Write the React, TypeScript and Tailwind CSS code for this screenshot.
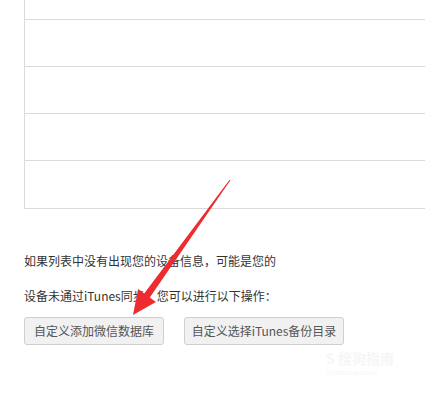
import React from 'react';

const rows = [0, 1, 2, 3];

export default function App() {
  return (
    <div
      className="relative w-[425px] h-[404px] overflow-hidden bg-white pl-[24px]"
      style={{ fontFamily: '"Noto Sans CJK SC", "Liberation Sans", sans-serif' }}
    >
      {/* device list table, top cut off */}
      <div className="w-[440px] border-l border-b border-[#dadada]">
        <div className="h-[20px] border-b border-[#dadada]" />
        {rows.map((r) => (
          <div key={r} className={`h-[47px] ${r < 3 ? 'border-b border-[#dadada]' : ''}`} />
        ))}
      </div>

      <p className="mt-[42px] text-[12px] leading-[20px] text-[#333]">
        如果列表中没有出现您的设备信息，可能是您的
      </p>
      <p className="mt-[15px] text-[12px] leading-[20px] text-[#333]">
        设备未通过iTunes同步，您可以进行以下操作：
      </p>

      <div className="mt-[11px] flex gap-[20px]">
        <button className="w-[140px] h-[28px] flex items-center justify-center rounded-[3px] border border-[#cfcfcf] bg-[#f1f1f1] text-[12px] text-[#555]">
          自定义添加微信数据库
        </button>
        <button className="w-[160px] h-[28px] flex items-center justify-center rounded-[3px] border border-[#cfcfcf] bg-[#f1f1f1] text-[12px] text-[#555]">
          自定义选择iTunes备份目录
        </button>
      </div>

      {/* annotation arrow drawn over the page */}
      <svg className="absolute left-0 top-0 pointer-events-none" width="425" height="404" viewBox="0 0 425 404">
        <polygon
          points="229.6,179.7 230.4,180.3 149.8,297.5 155.9,301.9 133,315 138.1,289.1 144.2,293.5"
          fill="#ee2b2f"
        />
      </svg>

      {/* faint watermark */}
      <div className="absolute left-[326px] top-[350px] flex flex-col gap-[3px] text-[#f6f6f6] pointer-events-none">
        <div className="text-[14px] leading-[16px] font-bold">S 搜狗指南</div>
        <div className="text-[6px] leading-[8px]">zhinan.sogou.com</div>
      </div>
    </div>
  );
}
